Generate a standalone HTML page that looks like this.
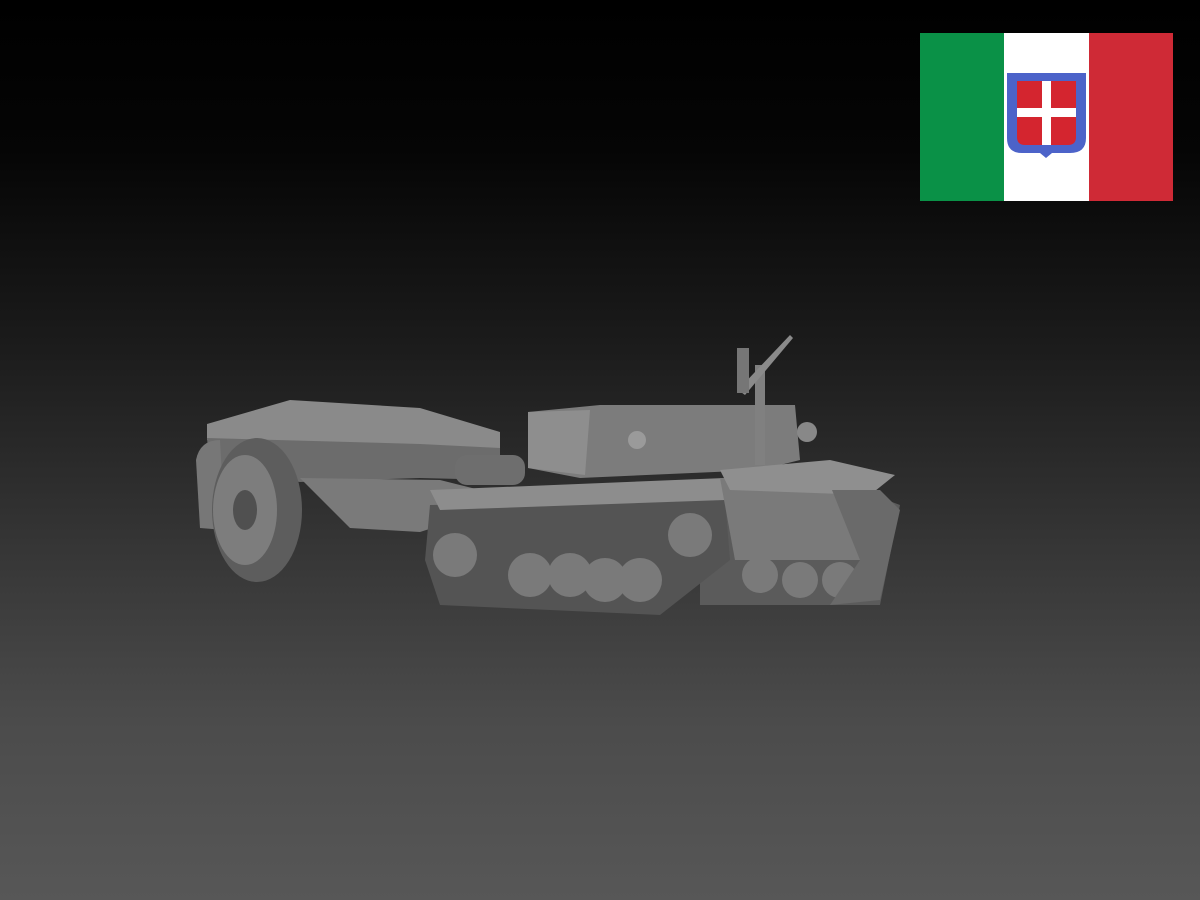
<!DOCTYPE html>
<html><head><style>
html,body{margin:0;padding:0;width:1200px;height:900px;overflow:hidden}
body{background:linear-gradient(to bottom,#000 0px,#050505 150px,#1c1c1c 350px,#363636 550px,#4b4b4b 720px,#575757 900px);font-family:"Liberation Sans",sans-serif}
svg{position:absolute;left:0;top:0}
</style></head><body>
<svg width="1200" height="900" viewBox="0 0 1200 900">
 <!-- flag -->
 <rect x="920" y="33" width="85" height="168" fill="#0a9147"/>
 <rect x="1004" y="33" width="86" height="168" fill="#ffffff"/>
 <rect x="1089" y="33" width="84" height="168" fill="#cf2a36"/>
 <path d="M1007 73 H1086 V138 Q1086 153 1070 153 H1052 L1046 158 L1040 153 H1022 Q1007 153 1007 138 Z" fill="#4c63c9"/>
 <path d="M1017 81 H1076 V137 Q1076 145 1068 145 H1025 Q1017 145 1017 137 Z" fill="#d4252f"/>
 <rect x="1042" y="81" width="9" height="64" fill="#fff"/>
 <rect x="1017" y="108" width="59" height="9" fill="#fff"/>

 <!-- trailer -->
 <path d="M207 424 L290 400 L420 408 L500 432 L500 450 L420 445 L207 440 Z" fill="#8a8a8a"/>
 <path d="M207 438 L420 444 L500 448 L500 480 L420 478 L300 482 L210 470 Z" fill="#6c6c6c"/>
 <path d="M300 478 L440 480 L520 500 L420 532 L350 528 Z" fill="#7a7a7a"/>
 <path d="M196 460 Q200 440 220 440 L225 530 L200 528 Z" fill="#777"/>
 <ellipse cx="257" cy="510" rx="45" ry="72" fill="#5d5d5d"/>
 <ellipse cx="245" cy="510" rx="32" ry="55" fill="#7d7d7d"/>
 <ellipse cx="245" cy="510" rx="12" ry="20" fill="#505050"/>
 <!-- tank tracks back -->
 <path d="M700 495 L860 490 L900 505 L880 605 L700 605 Z" fill="#5b5b5b"/>
 <!-- left track -->
 <path d="M430 505 L725 500 L730 560 L660 615 L440 605 L425 560 Z" fill="#545454"/>
 <g fill="#7a7a7a">
  <circle cx="455" cy="555" r="22"/><circle cx="530" cy="575" r="22"/><circle cx="570" cy="575" r="22"/>
  <circle cx="605" cy="580" r="22"/><circle cx="640" cy="580" r="22"/><circle cx="690" cy="535" r="22"/>
  <circle cx="760" cy="575" r="18"/><circle cx="800" cy="580" r="18"/><circle cx="840" cy="580" r="18"/>
 </g>
 <!-- hull -->
 <path d="M430 490 L725 478 L725 500 L440 510 Z" fill="#8d8d8d"/>
 <path d="M528 412 L600 405 L795 405 L800 460 L760 470 L580 478 L528 468 Z" fill="#7c7c7c"/>
 <path d="M528 412 L590 410 L585 475 L528 468 Z" fill="#8e8e8e"/>
 <path d="M720 478 L860 480 L865 560 L735 560 Z" fill="#7a7a7a"/>
 <path d="M720 470 L830 460 L895 475 L870 495 L730 490 Z" fill="#8f8f8f"/>
 <rect x="455" y="455" width="70" height="30" rx="12" fill="#6e6e6e"/>
 <path d="M832 490 L880 490 L900 510 L880 600 L830 605 L860 560 Z" fill="#6a6a6a"/>
 <!-- gun -->
 <rect x="755" y="365" width="10" height="100" fill="#808080"/>
 <path d="M738 390 L790 335 L793 338 L745 395 Z" fill="#8a8a8a"/>
 <rect x="737" y="348" width="12" height="45" fill="#767676"/>
 <circle cx="807" cy="432" r="10" fill="#888"/>
 <circle cx="637" cy="440" r="9" fill="#9a9a9a"/>
</svg>
</body></html>
